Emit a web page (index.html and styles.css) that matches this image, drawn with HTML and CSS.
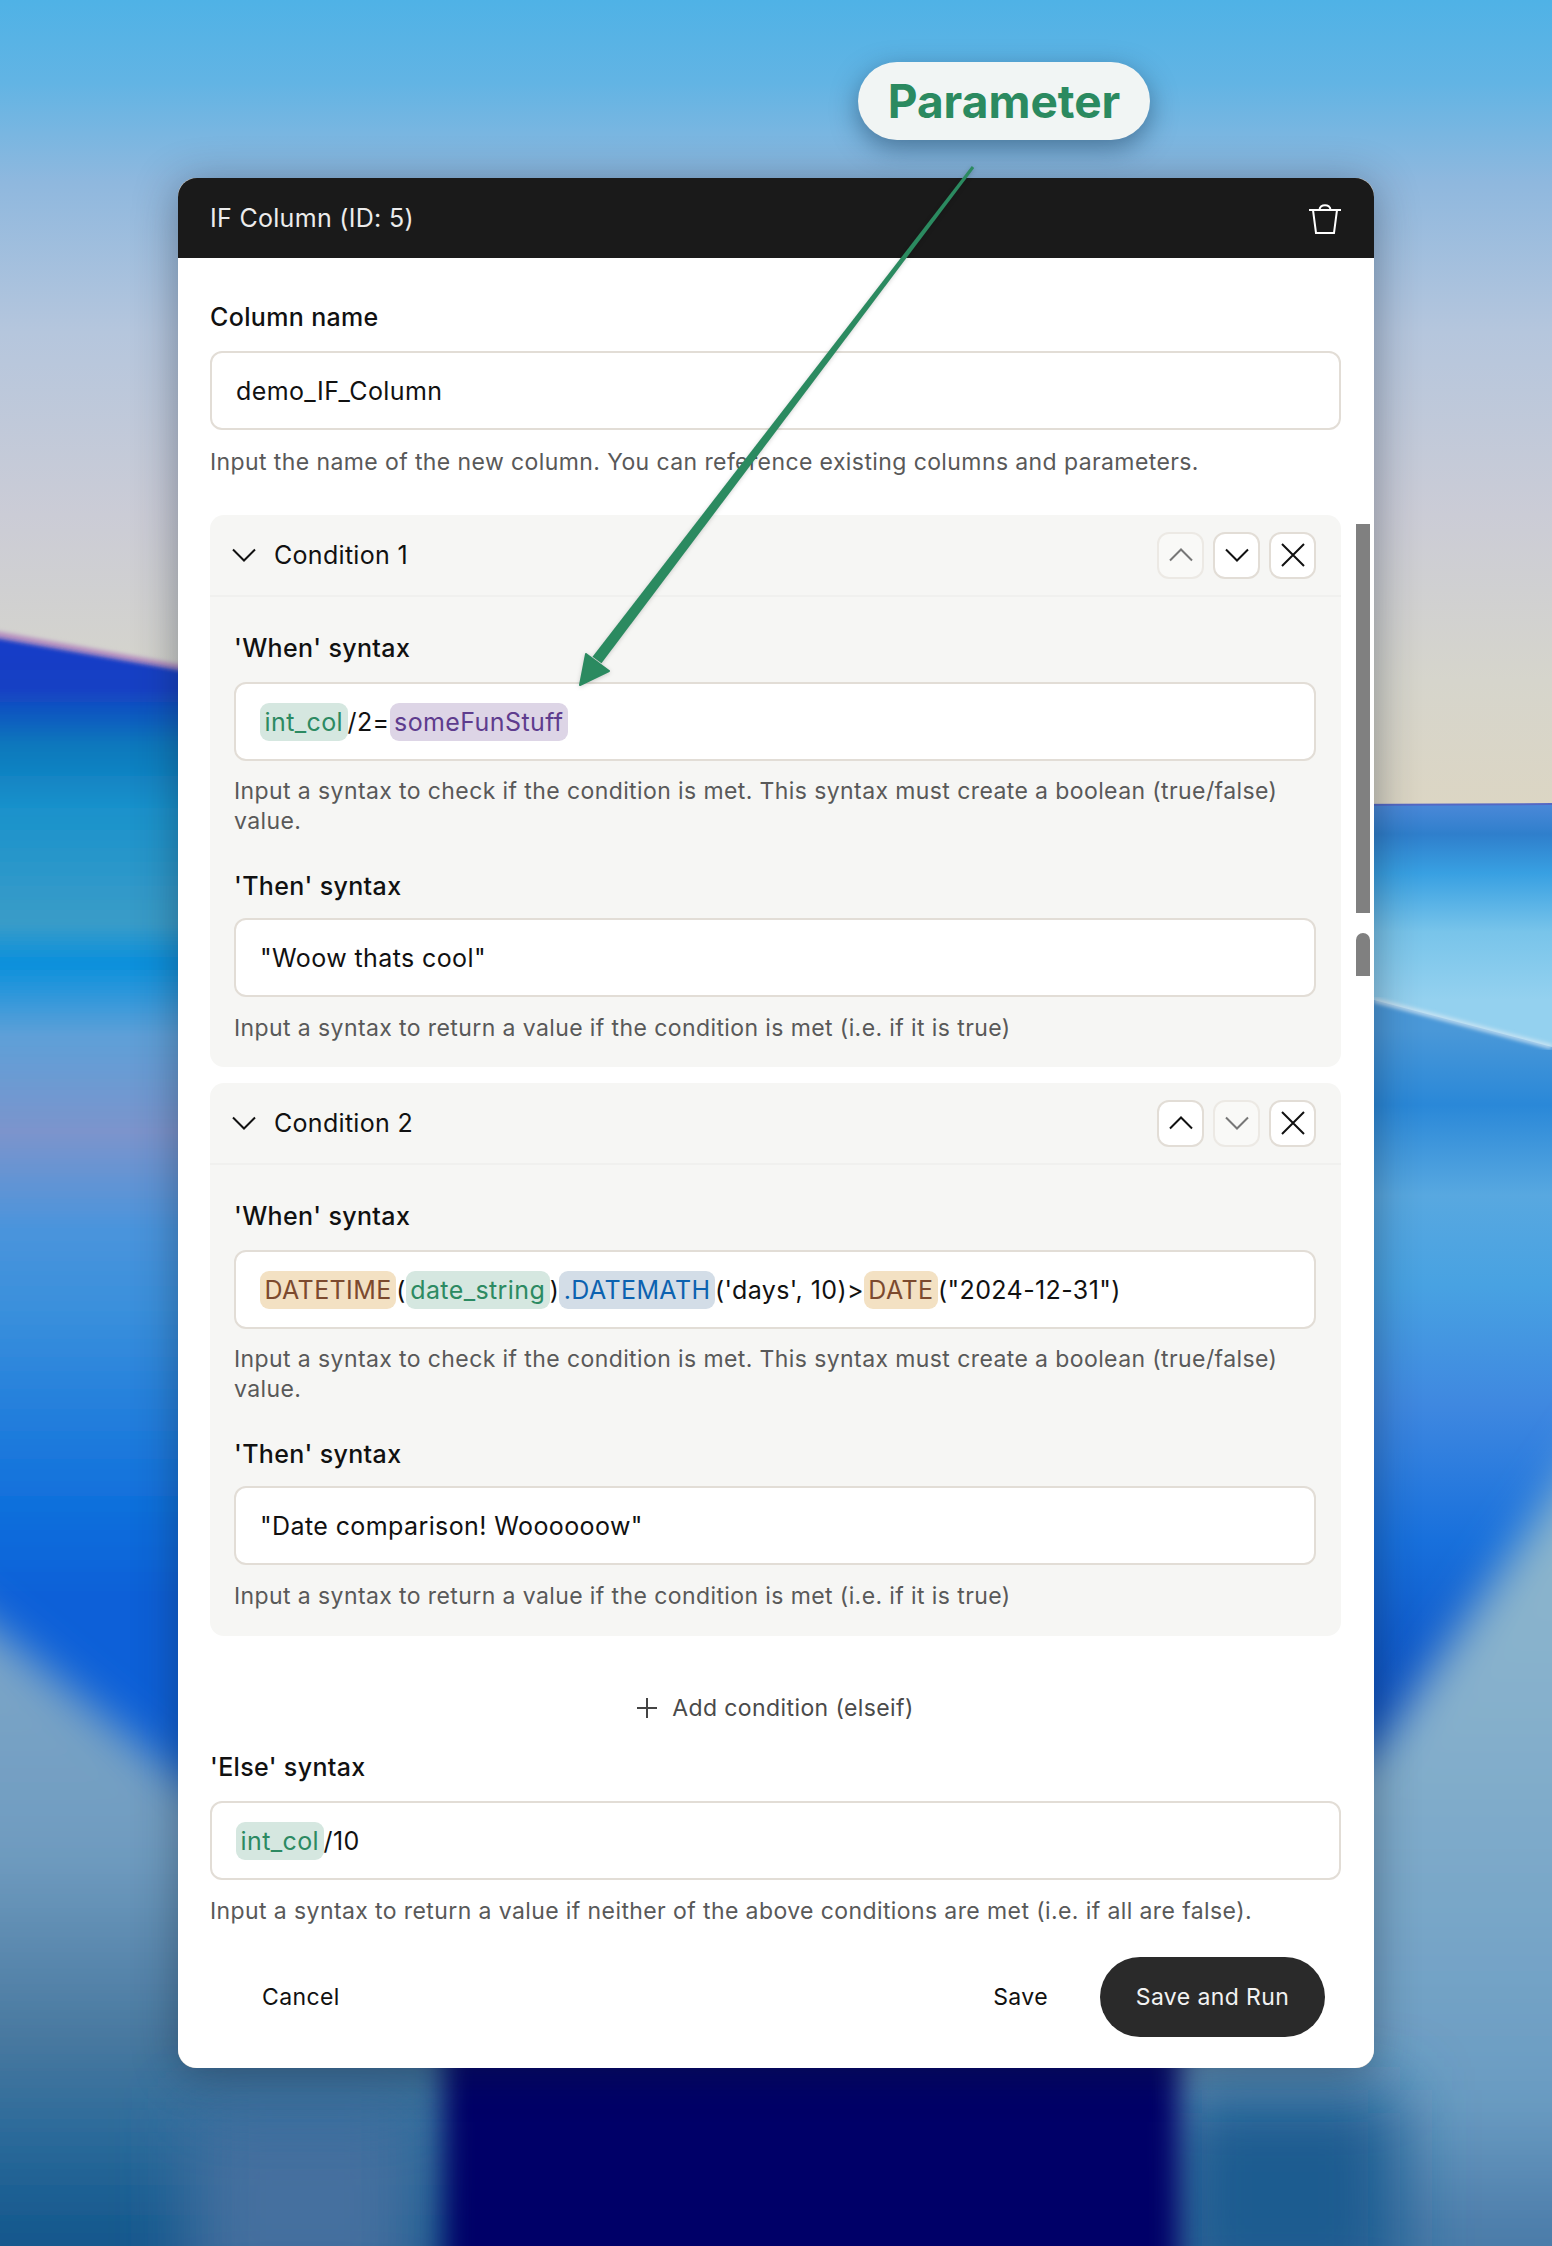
FILE: index.html
```html
<!DOCTYPE html>
<html lang="en">
<head>
<meta charset="utf-8">
<title>IF Column</title>
<link rel="stylesheet" href="styles.css">
</head>
<body>
<div class="page">
  <svg class="backdrop" width="1552" height="2246" viewBox="0 0 1552 2246" aria-hidden="true">
    <defs>
      <linearGradient id="sky" x1="0" y1="0" x2="0" y2="1">
        <stop offset="0" stop-color="#4fb2e6"/><stop offset=".1" stop-color="#62b4e4"/>
        <stop offset=".22" stop-color="#8fb8de"/><stop offset=".4" stop-color="#b5c6dd"/>
        <stop offset=".62" stop-color="#cbccd6"/><stop offset=".82" stop-color="#d6d5cc"/>
        <stop offset="1" stop-color="#ddd6c2"/>
      </linearGradient>
      <linearGradient id="seaL" x1="0" y1="632" x2="0" y2="2246" gradientUnits="userSpaceOnUse">
        <stop offset="0" stop-color="#1a3cc8"/><stop offset=".035" stop-color="#1440c4"/>
        <stop offset=".07" stop-color="#0a78bc"/><stop offset=".11" stop-color="#1a92cc"/>
        <stop offset=".18" stop-color="#3a9cc8"/><stop offset=".205" stop-color="#0a90dc"/>
        <stop offset=".25" stop-color="#5ea0d8"/><stop offset=".31" stop-color="#7c94cc"/>
        <stop offset=".37" stop-color="#4a94dc"/><stop offset=".42" stop-color="#3a90dc"/>
        <stop offset=".54" stop-color="#1070dc"/><stop offset=".6" stop-color="#0e60d8"/>
        <stop offset=".68" stop-color="#0e60d8"/>
      </linearGradient>
      <linearGradient id="seaR" x1="0" y1="805" x2="0" y2="1780" gradientUnits="userSpaceOnUse">
        <stop offset="0" stop-color="#4a88d8"/><stop offset=".03" stop-color="#2f7fcc"/>
        <stop offset=".07" stop-color="#38a0e2"/><stop offset=".13" stop-color="#78c4ea"/>
        <stop offset=".2" stop-color="#94d1ef"/>
      </linearGradient>
      <linearGradient id="seaR2" x1="0" y1="1030" x2="0" y2="1780" gradientUnits="userSpaceOnUse">
        <stop offset="0" stop-color="#4a98d8"/><stop offset=".1" stop-color="#2a88d8"/>
        <stop offset=".22" stop-color="#58a8e0"/><stop offset=".34" stop-color="#48a2e2"/>
        <stop offset=".5" stop-color="#3f88e0"/><stop offset=".68" stop-color="#1870dc"/>
        <stop offset=".9" stop-color="#0a50c4"/>
      </linearGradient>
      <linearGradient id="lowL" x1="0" y1="1640" x2="0" y2="2246" gradientUnits="userSpaceOnUse">
        <stop offset="0" stop-color="#7ca6c8"/><stop offset=".35" stop-color="#709cc0"/>
        <stop offset=".66" stop-color="#48789f"/><stop offset=".82" stop-color="#2a6a9a"/><stop offset="1" stop-color="#12568c"/>
      </linearGradient>
      <linearGradient id="lowR" x1="0" y1="1520" x2="0" y2="2246" gradientUnits="userSpaceOnUse">
        <stop offset="0" stop-color="#8cb6cc"/><stop offset=".25" stop-color="#86b0cc"/>
        <stop offset=".55" stop-color="#78a6c8"/><stop offset=".8" stop-color="#6a9cc2"/>
        <stop offset="1" stop-color="#4a7aa8"/>
      </linearGradient>
      <filter id="soft" x="-20%" y="-20%" width="140%" height="140%"><feGaussianBlur stdDeviation="22"/></filter>
      <filter id="edge" x="-5%" y="-5%" width="110%" height="110%"><feGaussianBlur stdDeviation="2"/></filter>
      <filter id="wide" x="-30%" y="-30%" width="160%" height="160%"><feGaussianBlur stdDeviation="14"/></filter>
      <filter id="haze" x="-50%" y="-50%" width="200%" height="200%"><feGaussianBlur stdDeviation="34"/></filter>
    </defs>
    <rect width="1552" height="830" fill="url(#sky)"/>
    <path d="M-10 630 L178 664 L800 760 L800 2246 L-10 2246 Z" fill="#b58fc0" filter="url(#edge)"/>
    <path d="M-10 637 L178 670 L800 770 L800 2246 L-10 2246 Z" fill="url(#seaL)" filter="url(#edge)"/>
    <path d="M800 806 L1560 803 L1560 2246 L800 2246 Z" fill="#5468c4"/>
    <path d="M800 808 L1560 805 L1560 1100 L800 1100 Z" fill="url(#seaR)"/>
    <path d="M800 990 L1374 1000 L1560 1049 L1560 1800 L800 1800 Z" fill="url(#seaR2)"/>
    <path d="M1374 1000 L1552 1047" stroke="#d5e8f4" stroke-width="4" fill="none" filter="url(#edge)"/>
    <path d="M-80 1570 L178 1775 L520 1950 L520 2300 L-80 2300 Z" fill="url(#lowL)" filter="url(#soft)"/>
    <path d="M1000 1950 L1374 1750 L1620 1400 L1620 2300 L1000 2300 Z" fill="url(#lowR)" filter="url(#soft)"/>
    <rect x="190" y="2110" width="230" height="190" fill="#44709f" filter="url(#haze)"/>
    <rect x="1170" y="2090" width="230" height="210" fill="#1a5c90" filter="url(#haze)"/>
    <rect x="444" y="1900" width="736" height="400" fill="#000068" filter="url(#wide)"/>
  </svg>

  <section class="panel">
    <header class="panel-head">
      <span>IF Column (ID: 5)</span>
      <svg class="trash" width="34" height="34" viewBox="0 0 34 34" fill="none" stroke="#fff" stroke-width="2"><path d="M1 9H33"/><path d="M11.500 9C11.500 2.500 22.500 2.500 22.500 9"/><path d="M5 9L8 32H26L29 9"/></svg>
    </header>
    <div class="panel-body">
      <div class="label">Column name</div>
      <div class="field">demo_IF_Column</div>
      <p class="help">Input the name of the new column. You can reference existing columns and parameters.</p>

      <article class="card first">
        <div class="card-head">
          <svg class="chev" width="24" height="14" viewBox="0 0 24 14" fill="none" stroke="#111" stroke-width="2"><path d="M1 1.500L12 12.500L23 1.500"/></svg>
          <span class="card-title">Condition 1</span>
          <div class="tools">
            <button class="tool off"><svg width="24" height="14" viewBox="0 0 24 14" fill="none" stroke="currentColor" stroke-width="2"><path d="M1 12.500L12 1.500L23 12.500"/></svg></button>
            <button class="tool"><svg width="24" height="14" viewBox="0 0 24 14" fill="none" stroke="currentColor" stroke-width="2"><path d="M1 1.500L12 12.500L23 1.500"/></svg></button>
            <button class="tool"><svg width="24" height="24" viewBox="0 0 24 24" fill="none" stroke="currentColor" stroke-width="2"><path d="M1 1L23 23M23 1L1 23"/></svg></button>
          </div>
        </div>
        <div class="card-body">
          <div class="label">'When' syntax</div>
          <div class="field"><span class="chip green">int_col</span>/2=<span class="chip purple">someFunStuff</span></div>
          <p class="help">Input a syntax to check if the condition is met. This syntax must create a boolean (true/false) value.</p>
          <div class="label then">'Then' syntax</div>
          <div class="field">"Woow thats cool"</div>
          <p class="help">Input a syntax to return a value if the condition is met (i.e. if it is true)</p>
        </div>
      </article>

      <article class="card">
        <div class="card-head">
          <svg class="chev" width="24" height="14" viewBox="0 0 24 14" fill="none" stroke="#111" stroke-width="2"><path d="M1 1.500L12 12.500L23 1.500"/></svg>
          <span class="card-title">Condition 2</span>
          <div class="tools">
            <button class="tool"><svg width="24" height="14" viewBox="0 0 24 14" fill="none" stroke="currentColor" stroke-width="2"><path d="M1 12.500L12 1.500L23 12.500"/></svg></button>
            <button class="tool off"><svg width="24" height="14" viewBox="0 0 24 14" fill="none" stroke="currentColor" stroke-width="2"><path d="M1 1.500L12 12.500L23 1.500"/></svg></button>
            <button class="tool"><svg width="24" height="24" viewBox="0 0 24 24" fill="none" stroke="currentColor" stroke-width="2"><path d="M1 1L23 23M23 1L1 23"/></svg></button>
          </div>
        </div>
        <div class="card-body">
          <div class="label">'When' syntax</div>
          <div class="field"><span class="chip orange">DATETIME</span><span>(</span><span class="chip green">date_string</span><span>)</span><span class="chip blue">.DATEMATH</span><span>('days', 10)&gt;</span><span class="chip orange">DATE</span><span>("2024-12-31")</span></div>
          <p class="help">Input a syntax to check if the condition is met. This syntax must create a boolean (true/false) value.</p>
          <div class="label then">'Then' syntax</div>
          <div class="field">"Date comparison! Woooooow"</div>
          <p class="help">Input a syntax to return a value if the condition is met (i.e. if it is true)</p>
        </div>
      </article>

      <div class="add-row">
        <svg width="20" height="20" viewBox="0 0 20 20" fill="none" stroke="#444" stroke-width="2"><path d="M10 0V20M0 10H20"/></svg>
        <span>Add condition (elseif)</span>
      </div>

      <div class="label">'Else' syntax</div>
      <div class="field"><span class="chip green">int_col</span>/10</div>
      <p class="help tail">Input a syntax to return a value if neither of the above conditions are met (i.e. if all are false).</p>

      <footer class="actions">
        <button class="btn">Cancel</button>
        <div class="actions-right">
          <button class="btn">Save</button>
          <button class="btn primary">Save and Run</button>
        </div>
      </footer>
    </div>
    <div class="thumb"></div>
    <div class="thumb small"></div>
  </section>

  <div class="pill">Parameter</div>
  <svg class="arrow" width="1552" height="2246" viewBox="0 0 1552 2246" aria-hidden="true">
    <path d="M971.800 166.100L974.200 167.900L601.500 663.300L592.500 656.700Z" fill="#2b8a60"/>
    <path d="M580 685L586 654L609 671Z" fill="#2b8a60" stroke="#2b8a60" stroke-width="2" stroke-linejoin="round"/>
  </svg>
</div>
</body>
</html>
```

FILE: styles.css
```css
* { box-sizing: border-box; }
html, body { margin: 0; padding: 0; }
body { font-family: Inter, "Liberation Sans", sans-serif; color: #111; }
.page { position: relative; width: 1552px; height: 2246px; overflow: hidden; padding: 178px 178px 0; background: #1070dc; }
.backdrop { position: absolute; left: 0; top: 0; }
.arrow { position: absolute; left: 0; top: 0; pointer-events: none; filter: drop-shadow(0 1px 2px rgba(0,0,0,.18)); }

.panel { position: relative; width: 1196px; height: 1890px; border-radius: 18px; background: #d8d3ca; box-shadow: 0 6px 44px rgba(20,30,50,.42); }
.panel-head { height: 80px; display: flex; align-items: center; justify-content: space-between; padding: 0 32px 0 32px; background: #1a1a1a; color: #ececec; border-radius: 19px 19px 0 0; font-size: 25px; letter-spacing: .3px; }
.panel-body { height: 1810px; padding: 44px 33px 32px 32px; background: #fff; border-radius: 0 0 19px 19px; }

.label { font-size: 25px; line-height: 30px; font-weight: 500; color: #111; letter-spacing: .35px; }
.field { display: flex; align-items: center; height: 79px; margin-top: 19px; padding: 0 24px; background: #fff; border: 2px solid #e2ddd6; border-radius: 12px; font-size: 25px; letter-spacing: .4px; color: #111; }
.help { margin: 17px 0 0; font-size: 23px; line-height: 30px; color: #595959; letter-spacing: .4px; }
.help.tail { margin-top: 16px; }
.card-body .help { margin-top: 15px; }

.card { background: #f6f6f4; border-radius: 14px; margin-top: 16px; }
.card.first { margin-top: 38px; }
.card-head { height: 82px; display: flex; align-items: center; padding: 0 25px 0 22px; border-bottom: 2px solid #f0f0ee; }
.chev { flex: none; }
.card-title { margin-left: 18px; font-size: 25px; color: #111; letter-spacing: .3px; }
.tools { margin-left: auto; display: flex; gap: 9px; }
.tool { width: 47px; height: 47px; padding: 0; display: flex; align-items: center; justify-content: center; background: #fff; border: 2px solid #e2ddd6; border-radius: 12px; color: #111; }
.tool.off { background: #f9f9f7; border-color: #ece9e4; color: #777; }
.card-body { padding: 36px 25px 0 24px; height: 471px; }
.card.first .card-body { height: 470px; }
.label.then { margin-top: 35px; }
.label.then + .field { margin-top: 17px; }
.label.then + .field + .help { margin-top: 16px; }

.chip { display: inline-block; height: 38px; line-height: 38px; padding: 0 4.5px; border-radius: 9px; }
.green { background: #d5e7e0; color: #2c8a62; }
.purple { background: #ddd5e6; color: #5e3c8e; }
.orange { background: #f3e1c3; color: #7c4a2e; }
.blue { background: #d3dde7; color: #0b62b0; }

.add-row { display: flex; align-items: center; justify-content: center; gap: 15px; height: 30px; margin-top: 57px; margin-bottom: 29px; font-size: 23px; color: #4a4a4a; letter-spacing: .4px; }

.actions { display: flex; align-items: center; justify-content: space-between; margin: 31px 16px 0 0; padding-left: 52px; height: 80px; }
.actions-right { display: flex; align-items: center; gap: 52px; }
.btn { padding: 0; border: 0; background: none; font: inherit; font-size: 23px; color: #111; letter-spacing: .4px; }
.btn.primary { width: 225px; height: 80px; border-radius: 40px; background: #2a2a2a; color: #f2f2f2; }

.thumb { position: absolute; left: 1178px; top: 346px; width: 14px; height: 389px; background: #808080; }
.thumb.small { top: 755px; height: 43px; border-radius: 7px 7px 0 0; }

.pill { position: absolute; left: 858px; top: 62px; width: 292px; height: 78px; display: flex; align-items: center; justify-content: center; background: #f1f5f4; border-radius: 39px; box-shadow: 0 8px 26px rgba(20,50,80,.5); color: #2b8a60; font-size: 46px; font-weight: 700; }
```
